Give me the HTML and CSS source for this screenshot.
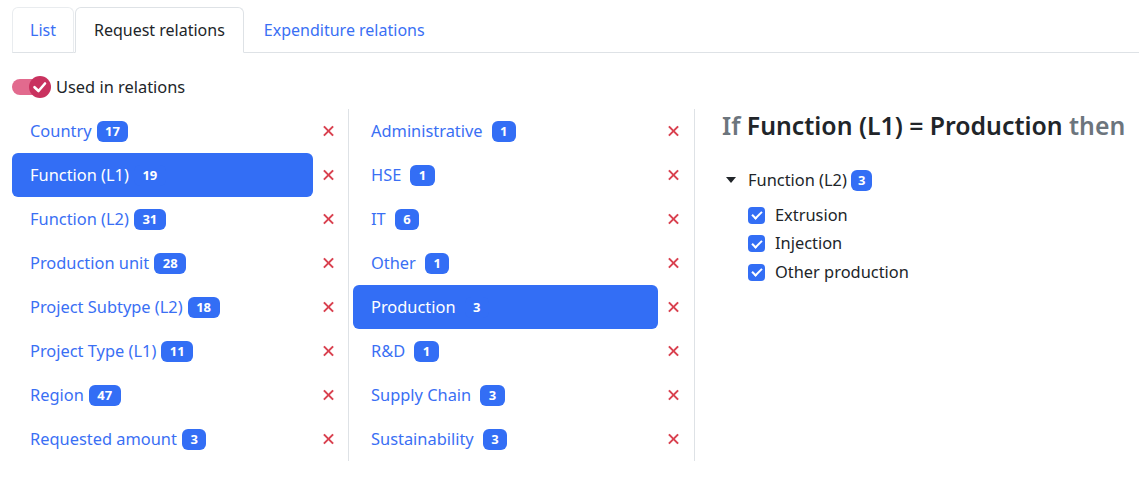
FILE: index.html
```html
<!DOCTYPE html>
<html lang="en">
<head>
  <meta charset="UTF-8">
  <title>Relations</title>
  <link rel="stylesheet" href="styles.css">
</head>
<body>
  <ul class="tabs">
    <li class="tab tab-idle">List</li>
    <li class="tab active">Request relations</li>
    <li class="tab">Expenditure relations</li>
  </ul>

  <div class="switch-row">
    <svg class="switch" width="42" height="24" viewBox="0 0 42 24">
      <rect x="0" y="4" width="34" height="16" rx="8" fill="#e26a8e"/>
      <circle cx="28" cy="12" r="11" fill="#c9325f"/>
      <path d="M22.5 12.2 L26.5 16 L33 8.5" stroke="#fff" stroke-width="2.6" fill="none" stroke-linecap="round" stroke-linejoin="round"/>
    </svg>
    <span>Used in relations</span>
  </div>

  <div class="relations">
    <div class="col col-first">
      <div class="row"><a class="item">Country<span class="badge">17</span></a><span class="remove"></span></div>
      <div class="row"><a class="item selected">Function (L1)<span class="badge">19</span></a><span class="remove"></span></div>
      <div class="row"><a class="item">Function (L2)<span class="badge">31</span></a><span class="remove"></span></div>
      <div class="row"><a class="item">Production unit<span class="badge">28</span></a><span class="remove"></span></div>
      <div class="row"><a class="item">Project Subtype (L2)<span class="badge">18</span></a><span class="remove"></span></div>
      <div class="row"><a class="item">Project Type (L1)<span class="badge">11</span></a><span class="remove"></span></div>
      <div class="row"><a class="item">Region<span class="badge">47</span></a><span class="remove"></span></div>
      <div class="row"><a class="item">Requested amount<span class="badge">3</span></a><span class="remove"></span></div>
    </div>

    <div class="col col-values">
      <div class="row"><a class="item">Administrative<span class="badge">1</span></a><span class="remove"></span></div>
      <div class="row"><a class="item">HSE<span class="badge">1</span></a><span class="remove"></span></div>
      <div class="row"><a class="item">IT<span class="badge">6</span></a><span class="remove"></span></div>
      <div class="row"><a class="item">Other<span class="badge">1</span></a><span class="remove"></span></div>
      <div class="row"><a class="item selected">Production<span class="badge">3</span></a><span class="remove"></span></div>
      <div class="row"><a class="item">R&amp;D<span class="badge">1</span></a><span class="remove"></span></div>
      <div class="row"><a class="item">Supply Chain<span class="badge">3</span></a><span class="remove"></span></div>
      <div class="row"><a class="item">Sustainability<span class="badge">3</span></a><span class="remove"></span></div>
    </div>

    <div class="col col-rule">
      <h2 class="rule-title"><span class="muted">If</span> Function (L1) = Production <span class="muted">then</span></h2>
      <div class="tree">
        <div class="tree-head">
          <span class="caret"></span>
          <span>Function (L2)</span>
          <span class="badge">3</span>
        </div>
        <label class="check"><span class="box"></span>Extrusion</label>
        <label class="check"><span class="box"></span>Injection</label>
        <label class="check"><span class="box"></span>Other production</label>
      </div>
    </div>
  </div>
</body>
</html>
```

FILE: styles.css
```css
* {
  box-sizing: border-box;
}

body {
  margin: 0;
  padding: 7px 0 0 12px;
  font-family: "Noto Sans", "Open Sans", sans-serif;
  font-size: 16.4px;
  line-height: 1.5;
  color: #212529;
  background: #fff;
}

/* tabs */
.tabs {
  display: flex;
  list-style: none;
  margin: 0;
  padding: 0;
  border-bottom: 1px solid #dee2e6;
  font-size: 16px;
  line-height: 24px;
}

.tab {
  padding: 10px 18px;
  margin-bottom: -1px;
  margin-right: 1px;
  border: 1px solid transparent;
  border-radius: 6px 6px 0 0;
  color: #3a6ff4;
}

.tab-idle {
  padding: 10px 17px;
  border-color: #e9ecef #e9ecef #dee2e6;
}

.tab.active {
  color: #212529;
  background: #fff;
  border-color: #dee2e6 #dee2e6 #fff;
}

/* switch */
.switch-row {
  display: flex;
  align-items: center;
  gap: 2px;
  margin-top: 22px;
  height: 24px;
}

/* columns */
.relations {
  display: grid;
  grid-template-columns: 336px 346px 1fr;
  margin-top: 10px;
}

.col-first {
  padding-right: 5px;
}

.col-values {
  border-left: 1px solid #dee2e6;
  padding: 0 6px 0 4px;
}

.col-rule {
  border-left: 1px solid #dee2e6;
  padding-left: 27px;
}

.row {
  display: flex;
  align-items: center;
  height: 44px;
}

.item {
  flex: 1;
  display: flex;
  align-items: center;
  height: 44px;
  padding: 0 18px;
  border-radius: 6px;
  color: #3a6ff4;
  cursor: pointer;
}

.item.selected {
  background: #336ef5;
  color: #fff;
}

.badge {
  display: inline-block;
  height: 21px;
  line-height: 21px;
  padding: 0 8.5px;
  margin-left: 5px;
  border-radius: 6px;
  background: #336ef5;
  color: #fff;
  font-size: 13px;
  font-weight: 700;
}

.col-values .badge {
  margin-left: 9px;
}

.remove {
  position: relative;
  width: 30px;
  height: 44px;
  cursor: pointer;
}

.remove::before,
.remove::after {
  content: "";
  position: absolute;
  left: 9px;
  top: 21px;
  width: 13px;
  height: 2px;
  background: #d9414f;
  transform: rotate(45deg);
}

.remove::after {
  transform: rotate(-45deg);
}

/* rule panel */
.rule-title {
  margin: 0;
  font-size: 24.8px;
  font-weight: 600;
  line-height: 28px;
  padding-top: 2px;
}

.muted {
  color: #6c757d;
}

.tree {
  margin-top: 27px;
  padding-left: 4px;
}

.tree-head {
  display: flex;
  align-items: center;
  height: 28px;
}

.caret {
  width: 0;
  height: 0;
  border-left: 5px solid transparent;
  border-right: 5px solid transparent;
  border-top: 6px solid #212529;
  margin-right: 12px;
}

.tree-head .badge {
  margin-left: 4px;
  padding: 0 7px;
}

.check {
  display: flex;
  align-items: center;
  height: 28.5px;
  padding-left: 22px;
}

.check:first-of-type {
  margin-top: 7px;
}

.box {
  position: relative;
  width: 17px;
  height: 17px;
  margin-right: 10px;
  border-radius: 4px;
  background: #336ef5;
}

.box::after {
  content: "";
  position: absolute;
  left: 5.5px;
  top: 2.5px;
  width: 4px;
  height: 8px;
  border: solid #fff;
  border-width: 0 2px 2px 0;
  transform: rotate(45deg);
}
```
